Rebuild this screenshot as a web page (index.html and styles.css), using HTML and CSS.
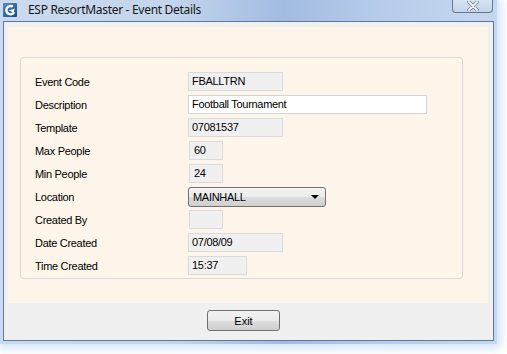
FILE: index.html
```html
<!DOCTYPE html>
<html>
<head>
  <title>ESP ResortMaster - Event Details</title>
  <link rel="stylesheet" href="styles.css">
</head>
<body>
  <div class="window">
    <div class="titlebar">
      <svg class="app-icon" width="14" height="14" viewBox="0 0 14 14">
        <defs>
          <linearGradient id="ig" x1="0" y1="0" x2="1" y2="1">
            <stop offset="0" stop-color="#4f8fcf"/>
            <stop offset="1" stop-color="#16497f"/>
          </linearGradient>
        </defs>
        <rect x="0" y="0" width="14" height="14" rx="1" fill="url(#ig)"/>
        <path d="M9.8 3.6 A4.2 4.2 0 1 0 11.2 9.2" fill="none" stroke="#fff" stroke-width="2.4"/>
        <path d="M5.8 7.4 L11.8 5.4 L10.6 9.6 Z" fill="#fff"/>
      </svg>
      <span class="title">ESP ResortMaster - Event Details</span>
      <div class="close">
        <svg width="16" height="10" viewBox="0 0 16 10">
          <path d="M4 1 L12 9 M12 1 L4 9" stroke="#6b7a90" stroke-width="3.4" stroke-linecap="round"/>
          <path d="M4 1 L12 9 M12 1 L4 9" stroke="#f4f7fb" stroke-width="1.8" stroke-linecap="round"/>
        </svg>
      </div>
    </div>
    <div class="client">
      <div class="panel">
        <div class="group">
          <div class="form">
            <label>Event Code</label>
            <div class="field ro w-md">FBALLTRN</div>
            <label>Description</label>
            <div class="field w-lg">Football Tournament</div>
            <label>Template</label>
            <div class="field ro w-md">07081537</div>
            <label>Max People</label>
            <div class="field ro w-xs">60</div>
            <label>Min People</label>
            <div class="field ro w-xs">24</div>
            <label>Location</label>
            <div class="combo">
              <span>MAINHALL</span>
              <span class="arrow"></span>
            </div>
            <label>Created By</label>
            <div class="field ro w-xs"></div>
            <label>Date Created</label>
            <div class="field ro w-md">07/08/09</div>
            <label>Time Created</label>
            <div class="field ro w-sm">15:37</div>
          </div>
        </div>
      </div>
      <div class="buttons">
        <button class="btn">Exit</button>
      </div>
    </div>
  </div>
</body>
</html>
```

FILE: styles.css
```css
body {
  margin: 0;
  padding: 0;
  width: 507px;
  height: 354px;
  background-color: #ffffff;
  overflow: hidden;
  font-family: "Liberation Sans", Arial, sans-serif;
}
.window {
  width: 497px;
  height: 344px;
  box-sizing: border-box;
  padding: 0 3px 3px 3px;
  background: linear-gradient(90deg, #cbdaee 0%, #c3d5ec 35%, #a2bbe1 57%, #b5cbea 75%, #c6d8ef 100%);
  box-shadow: 1px 1px 9px 3px rgba(150, 190, 240, 0.45);
}
.titlebar {
  height: 21px;
  display: flex;
  align-items: flex-start;
}
.app-icon {
  margin-top: 3px;
  flex: none;
}
.title {
  margin-left: 11px;
  margin-top: 2px;
  font-family: "Noto Sans", sans-serif;
  font-size: 12px;
  line-height: 16px;
  letter-spacing: -0.3px;
  color: #161616;
}
.close {
  margin-left: auto;
  margin-right: 1px;
  width: 41px;
  height: 13px;
  box-sizing: border-box;
  border: 1px solid #66778f;
  border-top: none;
  border-radius: 0 0 4px 4px;
  background: linear-gradient(#d8e3f1, #c4d4ea);
  display: flex;
  justify-content: center;
  align-items: center;
}
.client {
  height: 320px;
  box-sizing: border-box;
  border: 1px solid #5b789e;
  background-color: #f0f0f0;
  padding: 5px 5px 0 4px;
}
.panel {
  height: 276px;
  box-sizing: border-box;
  background-color: #fdf5e9;
  padding: 30px 0 0 12px;
}
.group {
  width: 443px;
  height: 222px;
  box-sizing: border-box;
  border: 1px solid #d9d9d9;
  border-radius: 3px;
  padding: 14px 0 0 14px;
}
.form {
  display: grid;
  grid-template-columns: 153px auto;
  grid-auto-rows: 19px;
  row-gap: 4px;
  align-items: center;
  font-size: 11px;
  letter-spacing: -0.3px;
  color: #000;
}
.field {
  height: 19px;
  box-sizing: border-box;
  border: 1px solid #d4d4d4;
  background-color: #ffffff;
  padding-left: 3px;
  line-height: 17px;
}
.field.ro {
  background-color: #f0f0f0;
  border-color: #dadada;
}
.w-xs { width: 34px; margin-left: 1px; padding-left: 4px; }
.w-sm { width: 59px; }
.w-md { width: 95px; }
.w-lg { width: 239px; }
.combo {
  width: 138px;
  height: 20px;
  box-sizing: border-box;
  border: 1px solid #707070;
  border-radius: 3px;
  background: linear-gradient(#f4f4f4 0%, #ebebeb 50%, #dddddd 51%, #cfcfcf 100%);
  display: flex;
  align-items: center;
  justify-content: space-between;
  padding: 0 6px 0 4px;
}
.arrow {
  width: 0;
  height: 0;
  border-left: 4px solid transparent;
  border-right: 4px solid transparent;
  border-top: 4px solid #000;
}
.buttons {
  padding: 7px 0 0 199px;
}
.btn {
  width: 73px;
  height: 21px;
  border: 1px solid #707070;
  border-radius: 3px;
  background: linear-gradient(#f2f2f2 0%, #ebebeb 50%, #dddddd 51%, #cfcfcf 100%);
  font-family: "Liberation Sans", Arial, sans-serif;
  font-size: 11px;
  color: #000;
  padding: 0;
}
```
